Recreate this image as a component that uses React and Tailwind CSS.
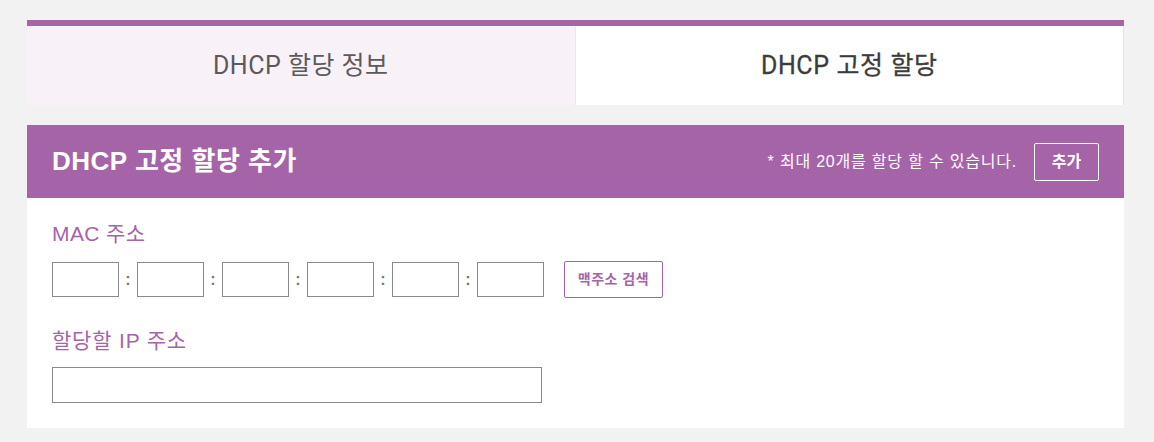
import React from "react";

const font = { fontFamily: '"Liberation Sans", "Noto Sans CJK KR", sans-serif' };

const MacInput = () => (
  <input
    type="text"
    className="h-[35px] w-[67px] border border-[#8a8a8a] bg-white outline-none"
  />
);

const App = () => {
  const macParts = [0, 1, 2, 3, 4, 5];

  return (
    <div
      className="min-h-[442px] bg-[#f2f2f2] pt-[20px] pb-[15px] pl-[27px] pr-[30px]"
      style={font}
    >
      {/* tabs */}
      <div className="flex border-t-[6px] border-[#a664a8]">
        <div className="flex h-[79px] flex-1 items-center justify-center border-r border-[#f3e3e3] bg-[#f9f1f8] text-[25px] tracking-[0.5px] text-[#5a5a5a] [font-family:Roboto,'Noto_Sans_CJK_KR',sans-serif]">
          DHCP 할당 정보
        </div>
        <div className="flex h-[79px] flex-1 items-center justify-center border-r border-[#f3e0cf] bg-white text-[25px] tracking-[0.6px] text-[#3c3c3c] [font-family:Roboto,'Noto_Sans_CJK_KR',sans-serif] [-webkit-text-stroke:0.3px_#3c3c3c]">
          DHCP 고정 할당
        </div>
      </div>

      {/* panel */}
      <div className="mt-[20px] bg-white">
        <div className="flex h-[73px] items-center justify-between bg-[#a664a8] px-[25px] text-white">
          <h2 className="text-[26px] font-bold tracking-[0.5px]">DHCP 고정 할당 추가</h2>
          <div className="flex items-center">
            <span className="text-[16px] tracking-[0.8px]">* 최대 20개를 할당 할 수 있습니다.</span>
            <button className="ml-[17px] h-[38px] w-[65px] rounded-[2px] border border-white text-[16px] font-bold text-white">
              추가
            </button>
          </div>
        </div>

        <div className="px-[25px] pt-[24px] pb-[25px]">
          <label className="block text-[21px] leading-[24px] tracking-[0.4px] text-[#a664a8]">MAC 주소</label>
          <div className="mt-[15px] flex items-center">
            {macParts.map((i) => (
              <React.Fragment key={i}>
                <MacInput />
                {i < 5 && (
                  <span className="w-[18px] text-center text-[16px] font-bold text-[#777]">:</span>
                )}
              </React.Fragment>
            ))}
            <button className="ml-[20px] h-[37px] w-[99px] rounded-[2px] border border-[#a664a8] text-[14px] font-bold tracking-[0.5px] text-[#a664a8]">
              맥주소 검색
            </button>
          </div>

          <label className="mt-[31px] block text-[21px] leading-[24px] tracking-[0.8px] text-[#a664a8]">
            할당할 IP 주소
          </label>
          <input
            type="text"
            className="mt-[14px] block h-[36px] w-[490px] border border-[#8a8a8a] bg-white outline-none"
          />
        </div>
      </div>
    </div>
  );
};

export default App;
